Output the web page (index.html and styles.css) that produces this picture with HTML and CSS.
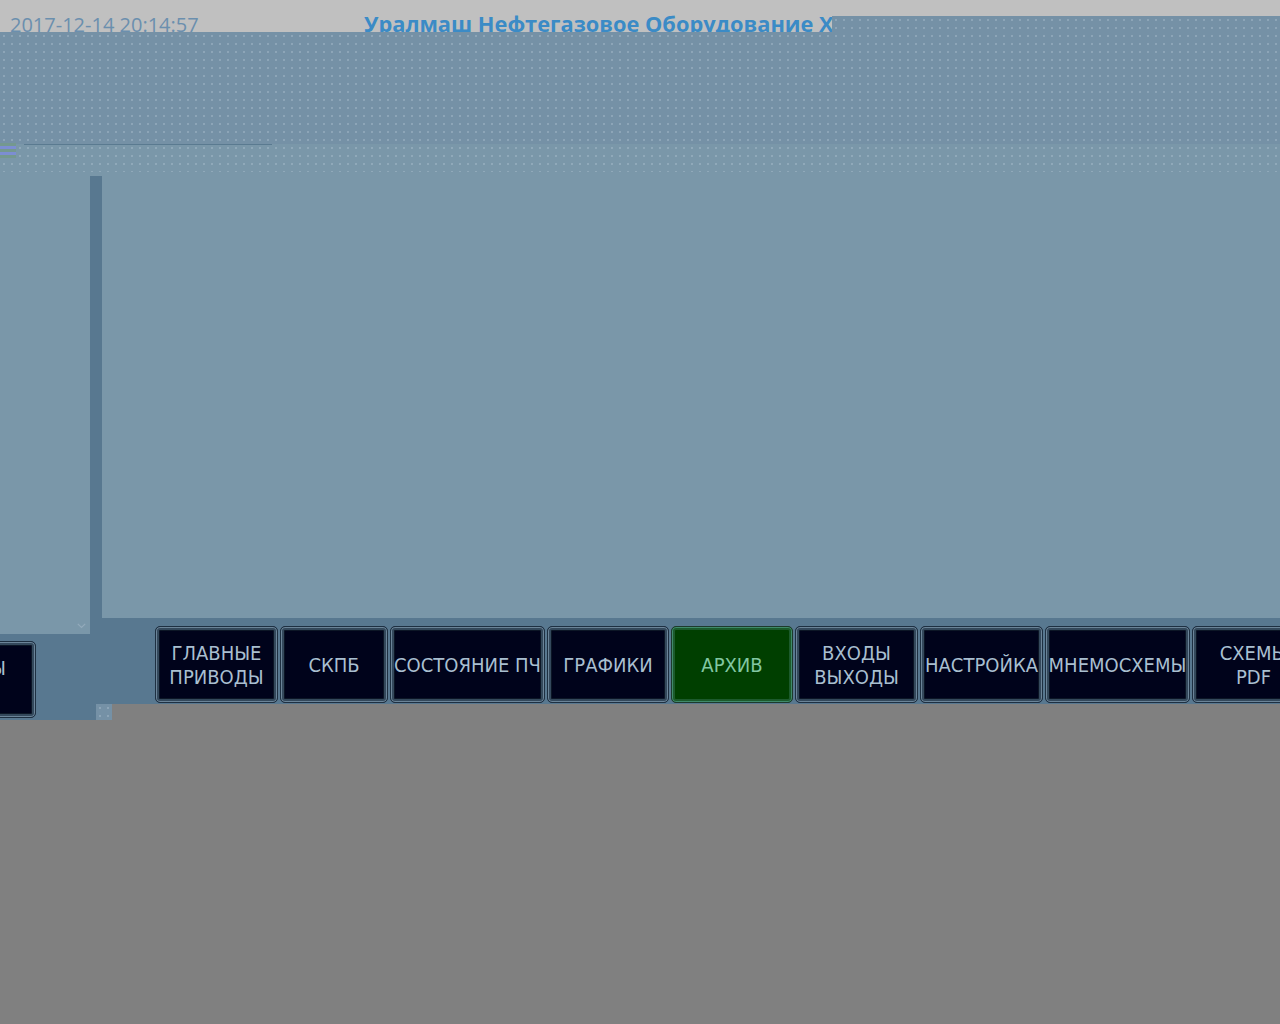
FILE: index.html
```html
<!DOCTYPE html>
<html lang="ru">
<head>
<meta charset="utf-8">
<title>Архив</title>
<link rel="stylesheet" href="styles.css">
</head>
<body>
<div class="header">
  <span class="clock">2017-12-14 20:14:57</span>
  <span class="title">Уралмаш Нефтегазовое Оборудование Холдинг</span>
</div>
<div class="ext dotted"></div>
<div class="screen">
  <div class="topband">
    <div class="marks"><i class="g"></i><i class="l"></i><i class="g"></i><i class="l"></i><i class="g"></i></div>
    <div class="rule"></div>
  </div>
  <div class="mid">
    <div class="leftpanel">
      <svg class="chev" width="9" height="6" viewBox="0 0 9 6"><polyline points="0.8,0.8 4.5,4.5 8.2,0.8" fill="none" stroke="#93aabb" stroke-width="1.2"/></svg>
    </div>
    <div class="scroll"></div>
    <div class="main"></div>
    <div class="bar">
      <div class="btn w123"><span>ГЛАВНЫЕ<br>ПРИВОДЫ</span></div>
      <div class="btn w108"><span>СКПБ</span></div>
      <div class="btn w155"><span>СОСТОЯНИЕ ПЧ</span></div>
      <div class="btn w122"><span>ГРАФИКИ</span></div>
      <div class="btn w122 active"><span>АРХИВ</span></div>
      <div class="btn w123"><span>ВХОДЫ<br>ВЫХОДЫ</span></div>
      <div class="btn w123"><span>НАСТРОЙКА</span></div>
      <div class="btn w145"><span>МНЕМОСХЕМЫ</span></div>
      <div class="btn w123"><span>СХЕМЫ<br>PDF</span></div>
    </div>
  </div>
  <div class="btn w123 sidebtn"><span>НАСОСЫ</span></div>
</div>
<div class="tail">
  <div class="tail-dark"></div>
  <div class="tail-dots dotted"></div>
</div>
</body>
</html>
```
FILE: styles.css
```css
html, body {
  margin: 0;
  padding: 0;
}
body {
  width: 1280px;
  height: 1024px;
  overflow: hidden;
  background: #808080;
  font-family: "Open Sans", "Liberation Sans", sans-serif;
  position: relative;
}
.header {
  height: 32px;
  background: #c0c0c0;
  display: flex;
  align-items: flex-start;
  padding-left: 10px;
  box-sizing: border-box;
  overflow: hidden;
}
.clock {
  font-size: 20px;
  line-height: 27px;
  margin-top: 11px;
  color: #6b8fae;
  width: 354px;
  flex: 0 0 auto;
  white-space: nowrap;
}
.title {
  font-size: 21.8px;
  line-height: 28px;
  margin-top: 10px;
  font-weight: 700;
  color: #3b8bc6;
  white-space: nowrap;
}
.dotted {
  background-image: radial-gradient(circle, rgba(178, 196, 210, 0.4) 0.7px, transparent 1.1px);
  background-size: 8px 8px;
  background-color: #7591a6;
}
.ext {
  position: absolute;
  left: 832px;
  top: 16px;
  width: 448px;
  height: 16px;
}
.screen {
  height: 672px;
  background: #587890;
  position: relative;
}
.topband {
  height: 140px;
  display: flex;
  align-items: flex-start;
  background-image:
    radial-gradient(circle, rgba(178, 196, 210, 0.4) 0.7px, transparent 1.1px),
    linear-gradient(#7591a6 0 112px, #7a97a9 112px 140px);
  background-size: 8px 8px, 100% 100%;
}
.marks {
  width: 16px;
  margin-top: 111px;
  display: flex;
  flex-direction: column;
}
.marks i {
  display: block;
  height: 3px;
}
.marks i.g { background: #74988f; }
.marks i.l { background: #7c8ed2; }
.rule {
  margin-top: 112px;
  margin-left: 8px;
  width: 248px;
  height: 1px;
  background: #5a7a90;
}
.mid {
  display: grid;
  grid-template-columns: 90px 12px 1fr;
  grid-template-rows: 446px 86px;
}
.leftpanel {
  grid-column: 1;
  grid-row: 1 / 3;
  align-self: start;
  height: 462px;
  background: #7a97a9;
  display: flex;
  justify-content: flex-end;
  align-items: flex-end;
}
.chev {
  margin: 0 4px 5px 0;
}
.scroll {
  grid-column: 2;
  grid-row: 1 / 3;
  align-self: start;
  height: 462px;
  background: linear-gradient(#7a97a9 0 4px, #587890 4px);
}
.main {
  grid-column: 3;
  grid-row: 1;
  background: #7a97a9;
}
.bar {
  grid-column: 3;
  grid-row: 2;
  display: flex;
  gap: 2px;
  padding: 8px 0 0 53px;
  min-width: 0;
}
.btn {
  flex: 0 0 auto;
  height: 77px;
  box-sizing: border-box;
  border-radius: 5px;
  border: 1px solid #1e3042;
  background: #00031b;
  box-shadow: inset 0 0 0 1px #6b8498, inset 0 0 0 3px #34495c, inset 0 0 0 4px #0c1626;
  display: flex;
  align-items: center;
  justify-content: center;
  text-align: center;
  color: #a9bfd0;
  font-family: "DejaVu Sans Condensed", "Liberation Sans", sans-serif;
  font-size: 20px;
  line-height: 24px;
  white-space: nowrap;
}
.btn.active {
  background: #003f00;
  border-color: #1d3a2c;
  box-shadow: inset 0 0 0 1px #3f8a6a, inset 0 0 0 3px #1c5a2c;
  color: #82c7a2;
}
.w108 { width: 108px; }
.w122 { width: 122px; }
.w123 { width: 123px; }
.w145 { width: 145px; }
.w155 { width: 155px; }
.sidebtn {
  position: absolute;
  left: -87px;
  top: 609px;
  z-index: 2;
  align-items: flex-start;
  padding-top: 14px;
  padding-right: 18px;
}
.tail {
  display: flex;
  height: 16px;
}
.tail-dark {
  width: 96px;
  background: #587890;
}
.tail-dots {
  width: 16px;
}
```
